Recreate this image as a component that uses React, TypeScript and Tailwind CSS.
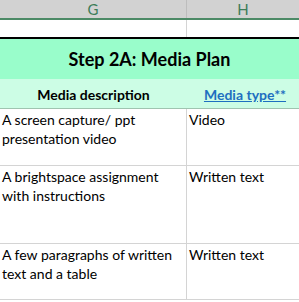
import React from "react";

const font = { fontFamily: "Lato, 'Open Sans', sans-serif" };

function Row({ h, left, right }: { h: string; left: React.ReactNode; right: React.ReactNode }) {
  return (
    <div className={`flex ${h} border-b border-[#d4d4d4]`}>
      <div className="w-[187px] shrink-0 border-r border-[#d4d4d4] pl-[2px] pt-[1px] leading-[19px]">{left}</div>
      <div className="flex-1 pl-[2px] pt-[1px] leading-[19px]">{right}</div>
    </div>
  );
}

export default function App() {
  return (
    <div className="w-[299px] h-[302px] bg-white overflow-hidden text-[14px] text-black" style={font}>
      <div className="flex h-[20px] bg-[#d2d2d2] border-b-2 border-[#4c8a66] text-[#3d7d59] text-[15px] leading-[18px]">
        <div className="w-[187px] shrink-0 border-r border-[#bdbdbd] text-center">G</div>
        <div className="flex-1 text-center">H</div>
      </div>
      <div className="flex h-[17px]">
        <div className="w-[187px] shrink-0 border-r border-[#d4d4d4]" />
        <div className="flex-1" />
      </div>
      <div className="h-[2px] bg-black" />
      <div className="h-[40px] bg-[#99fdcb] flex items-center justify-center font-bold text-[18px] pt-[1px]">
        Step 2A: Media Plan
      </div>
      <div className="flex h-[30px] bg-[#ccfde5] border-b border-[#9fc4b0] font-bold items-center pt-[2px]">
        <div className="w-[187px] shrink-0 text-center">Media description</div>
        <div className="flex-1 text-center pl-[4px] text-[#1e6fc0] underline">Media type**</div>
      </div>
      <Row h="h-[57px]" left={<>A screen capture/ ppt<br />presentation video</>} right="Video" />
      <Row h="h-[78px]" left={<>A brightspace assignment<br />with instructions</>} right="Written text" />
      <Row h="h-[56px]" left={<>A few paragraphs of written<br />text and a table</>} right="Written text" />
    </div>
  );
}
